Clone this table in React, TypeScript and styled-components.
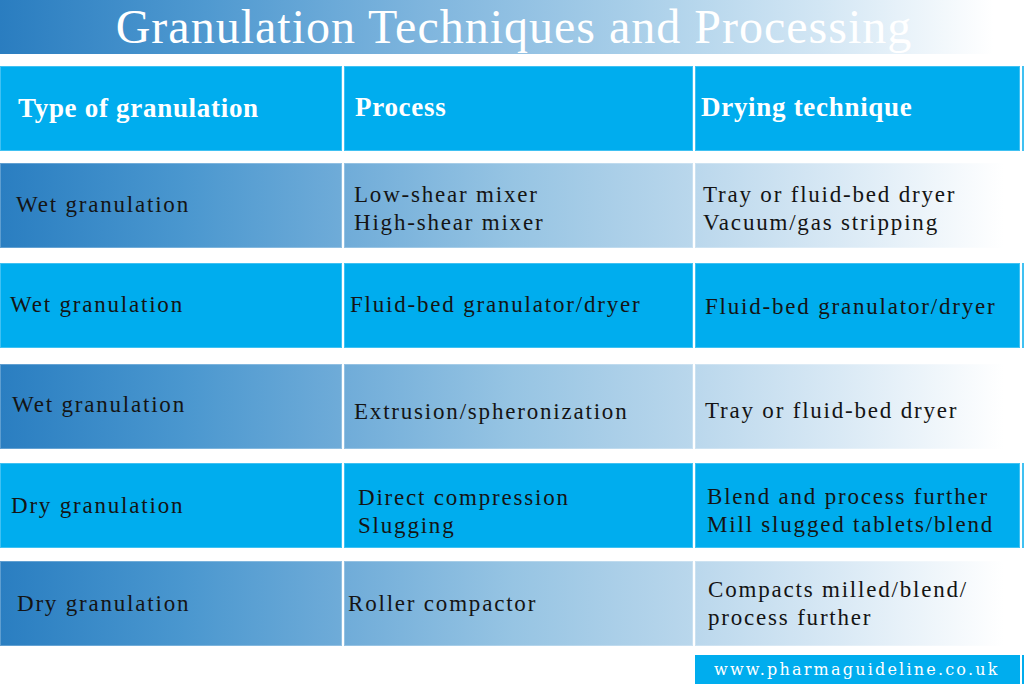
import React from 'react';
import styled, { createGlobalStyle, css } from 'styled-components';

const GlobalStyle = createGlobalStyle`
  html, body {
    margin: 0;
    padding: 0;
    background: #ffffff;
  }
  body {
    width: 1024px;
    height: 684px;
    overflow: hidden;
  }
`;

const CYAN = '#00adee';
const FADE = 'linear-gradient(90deg, #2a7ec1 0%, #4a97cf 18%, #6eabd8 33%, #96c4e3 50%, #b6d5eb 66%, #d9e9f5 82%, #ffffff 98%)';
const COLUMNS = '342px 351px 327px 1fr';

type Tone = 'solid' | 'fade';

interface CellData {
  lines: string[];
  pl: number;
  shift?: number;
}

interface RowData {
  tone: Tone;
  gap: number;
  cells: CellData[];
}

const rows: RowData[] = [
  {
    tone: 'fade',
    gap: 12,
    cells: [
      { lines: ['Wet granulation'], pl: 16, shift: -1 },
      { lines: ['Low-shear mixer', 'High-shear mixer'], pl: 10, shift: 3 },
      { lines: ['Tray or fluid-bed dryer', 'Vacuum/gas stripping'], pl: 8, shift: 3 },
    ],
  },
  {
    tone: 'solid',
    gap: 15,
    cells: [
      { lines: ['Wet granulation'], pl: 10, shift: -1 },
      { lines: ['Fluid-bed granulator/dryer'], pl: 6, shift: -1 },
      { lines: ['Fluid-bed granulator/dryer'], pl: 10, shift: 1 },
    ],
  },
  {
    tone: 'fade',
    gap: 16,
    cells: [
      { lines: ['Wet granulation'], pl: 12, shift: -2 },
      { lines: ['Extrusion/spheronization'], pl: 10, shift: 5 },
      { lines: ['Tray or fluid-bed dryer'], pl: 10, shift: 4 },
    ],
  },
  {
    tone: 'solid',
    gap: 14,
    cells: [
      { lines: ['Dry granulation'], pl: 11, shift: 0 },
      { lines: ['Direct compression', 'Slugging'], pl: 14, shift: 6 },
      { lines: ['Blend and process further', 'Mill slugged tablets/blend'], pl: 12, shift: 5 },
    ],
  },
  {
    tone: 'fade',
    gap: 13,
    cells: [
      { lines: ['Dry granulation'], pl: 17, shift: 0 },
      { lines: ['Roller compactor'], pl: 4, shift: 0 },
      { lines: ['Compacts milled/blend/', 'process further'], pl: 13, shift: 0 },
    ],
  },
];

const Page = styled.div`
  width: 1024px;
  height: 684px;
  display: flex;
  flex-direction: column;
  background: #ffffff;
`;

const Banner = styled.div`
  height: 54px;
  background: linear-gradient(90deg, #2a7dc0 0%, #4f99d0 20%, #80b6de 42%, #a9cfe9 62%, #d2e6f4 80%, #ffffff 97%);
  display: flex;
  align-items: center;
  justify-content: center;
`;

const Title = styled.h1`
  margin: 0;
  padding-left: 4px;
  font-family: 'Liberation Serif', 'Times New Roman', serif;
  font-weight: 400;
  font-size: 48px;
  letter-spacing: 1px;
  line-height: 54px;
  color: #ffffff;
`;

const Table = styled.div`
  display: flex;
  flex-direction: column;
  margin-top: 12px;
`;

const Row = styled.div<{ $tone: Tone; $gap?: number }>`
  display: grid;
  grid-template-columns: ${COLUMNS};
  height: 85px;
  margin-top: ${(p) => p.$gap ?? 0}px;
  background: ${(p) => (p.$tone === 'solid' ? CYAN : FADE)};
`;

const Cell = styled.div<{ $pl: number; $shift?: number; $edge?: boolean }>`
  display: flex;
  flex-direction: column;
  justify-content: center;
  padding-left: ${(p) => p.$pl}px;
  ${(p) =>
    (p.$shift ?? 0) >= 0
      ? css`padding-top: ${(p.$shift ?? 0) * 2}px;`
      : css`padding-bottom: ${-(p.$shift ?? 0) * 2}px;`}
  ${(p) =>
    p.$edge &&
    css`
      border-left: 2px solid #ffffff;
    `}
  box-shadow: inset 0 0 0 1px rgba(255, 255, 255, 0.25);
`;

const HeadText = styled.span`
  font-family: 'Liberation Serif', 'Times New Roman', serif;
  font-weight: 700;
  font-size: 27px;
  letter-spacing: 0.7px;
  color: #ffffff;
`;

const BodyText = styled.span`
  font-family: 'Liberation Serif', 'Times New Roman', serif;
  font-size: 23px;
  letter-spacing: 1.8px;
  line-height: 28px;
  color: #141414;
  white-space: nowrap;
`;

const Footer = styled.div`
  display: grid;
  grid-template-columns: ${COLUMNS};
  height: 29px;
  margin-top: 9px;
`;

const FooterGap = styled.div`
  background: #ffffff;
`;

const FooterTag = styled.div<{ $edge?: boolean }>`
  background: ${CYAN};
  display: flex;
  align-items: center;
  padding-left: 19px;
  border-left: ${(p) => (p.$edge ? '2px solid #ffffff' : 'none')};
`;

const SiteName = styled.span`
  font-family: 'DejaVu Serif', 'Liberation Serif', serif;
  font-size: 16px;
  letter-spacing: 2.2px;
  color: #ffffff;
`;

const headers = [
  { label: 'Type of granulation', pl: 18, shift: 0 },
  { label: 'Process', pl: 11, shift: -1 },
  { label: 'Drying technique', pl: 6, shift: -1 },
];

export default function App() {
  return (
    <Page>
      <GlobalStyle />
      <Banner>
        <Title>Granulation Techniques and Processing</Title>
      </Banner>

      <Table>
        <Row $tone="solid">
          {headers.map((h, i) => (
            <Cell key={h.label} $pl={h.pl} $shift={h.shift} $edge={i > 0}>
              <HeadText>{h.label}</HeadText>
            </Cell>
          ))}
          <Cell $pl={0} $edge />
        </Row>

        {rows.map((row, r) => (
          <Row key={r} $tone={row.tone} $gap={row.gap}>
            {row.cells.map((c, i) => (
              <Cell key={i} $pl={c.pl} $shift={c.shift} $edge={i > 0}>
                {c.lines.map((line) => (
                  <BodyText key={line}>{line}</BodyText>
                ))}
              </Cell>
            ))}
            <Cell $pl={0} $edge />
          </Row>
        ))}

        <Footer>
          <FooterGap />
          <FooterGap />
          <FooterTag $edge>
            <SiteName>www.pharmaguideline.co.uk</SiteName>
          </FooterTag>
          <FooterTag $edge />
        </Footer>
      </Table>
    </Page>
  );
}
